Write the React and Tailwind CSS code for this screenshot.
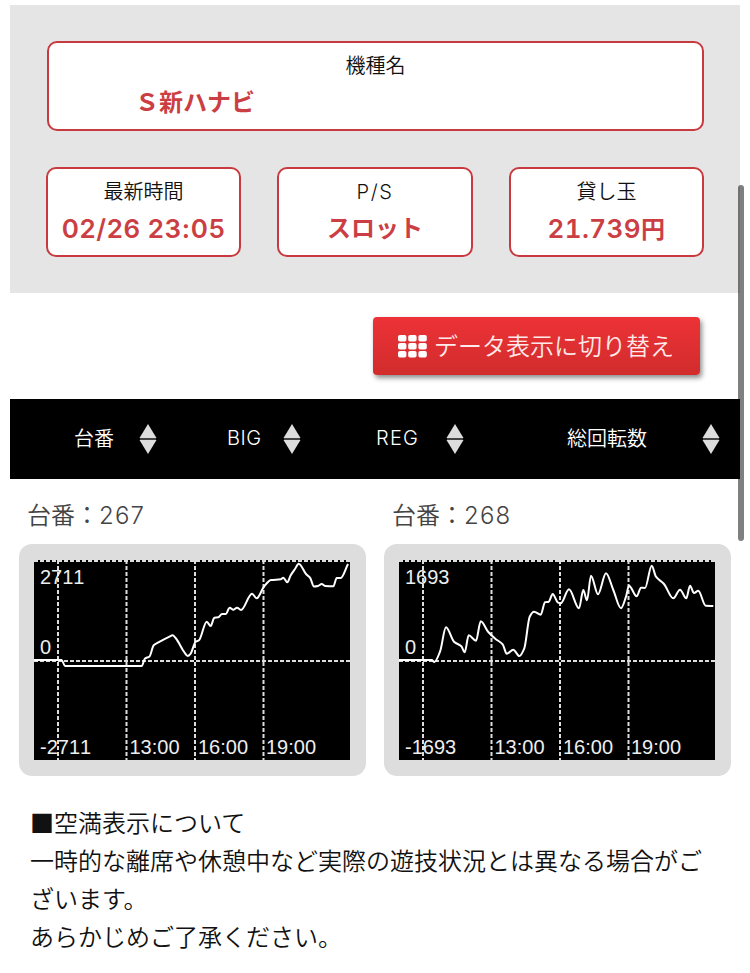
import React from "react";

const GRID_X = [24, 92.5, 161, 229.5];

const TIME_LABELS = [
  { x: 95.5, text: "13:00" },
  { x: 164, text: "16:00" },
  { x: 232, text: "19:00" },
];

const MACHINES = [
  {
    no: 267,
    max: 2711,
    points: [
      [0, 100], [27.7, 100], [31, 106], [107.7, 106], [111, 98.5], [115.5, 96.5],
      [119.7, 85.3], [123, 83.2], [135, 76.8], [138.7, 75.3], [142, 78.5],
      [150.5, 92.5], [153.7, 96], [156.5, 93.8], [161.7, 81.7],
      [165, 80.3], [172.7, 61.7], [176.7, 66], [180.3, 57.7], [184.3, 57.3],
      [188, 54], [191.7, 54], [195.7, 47.7], [199.3, 49.7], [203, 47.7],
      [207, 50], [218, 33.7], [222.7, 38.3], [230, 26.7], [237, 20],
      [246.7, 19.3], [249.3, 17.7], [253.3, 22.3], [256.7, 15.3], [261, 9],
      [264.7, 3.7], [272, 14], [276, 17.7], [280, 26.5], [284, 26],
      [287.7, 24], [291.3, 26], [299.3, 26.3], [302.7, 18], [306.7, 18], [314, 4],
    ],
  },
  {
    no: 268,
    max: 1693,
    points: [
      [0, 100], [32.7, 100], [35.3, 102], [41, 91.7], [47, 67.3], [55, 81.7],
      [62.3, 86.3], [65.7, 92.3], [69.7, 75.3], [77, 80.7], [81.7, 61.3],
      [89.3, 72], [96.3, 78.7], [103.7, 84.3], [107.7, 93.7], [114.3, 89.7],
      [120.3, 96], [125.3, 88.3], [130.7, 56.7], [135, 51.7], [141.7, 54.7],
      [146, 42.3], [149.7, 41.7], [153.7, 34], [158.7, 42.3], [161.7, 43.3],
      [170, 29.3], [180, 48.3], [184.3, 30], [188, 40.3], [192, 15.7],
      [199, 34.3], [207, 13.3], [214.3, 30], [222, 48.3], [227, 36.7],
      [230, 25.7], [237.7, 36.3], [242, 27.7], [246, 28], [252.7, 5.7],
      [257, 16.7], [265, 24], [274.3, 38.3], [281, 29.7], [287.3, 38.3],
      [291, 25.7], [295, 33], [299.3, 30.7], [306.7, 45.7], [314.3, 46],
    ],
  },
];

// Monotone cubic through the points, so peaks never overshoot
const toSmoothPath = (points) => {
  const slope = (i) =>
    (points[i + 1][1] - points[i][1]) / (points[i + 1][0] - points[i][0]);

  const tangents = points.map((_, i) => {
    if (i === 0) return slope(0);
    if (i === points.length - 1) return slope(i - 1);
    const a = slope(i - 1);
    const b = slope(i);
    return a * b <= 0 ? 0 : (2 * a * b) / (a + b);
  });

  return points.reduce((path, [x, y], i) => {
    if (i === 0) return `M${x} ${y}`;
    const [px, py] = points[i - 1];
    const third = (x - px) / 3;
    return `${path}C${px + third} ${py + tangents[i - 1] * third} ${x - third} ${
      y - tangents[i] * third
    } ${x} ${y}`;
  }, "");
};

const InfoBox = ({ label, children, className = "" }) => (
  <div
    className={`h-[90px] rounded-[10px] border-2 border-[#c93a40] bg-white pt-2 ${className}`}
  >
    <p className="mb-0.5 text-center text-xl leading-[30px] text-[#111]">{label}</p>
    {children}
  </div>
);

const SortIcon = () => (
  <svg width="18" height="32" viewBox="0 0 18 32" className="mr-px shrink-0">
    <path d="M9 1 17.5 15H.5Z" fill="#ddd" />
    <path d="M9 31 17.5 17H.5Z" fill="#ddd" />
    <path d="M1 16H17" stroke="#444" strokeWidth="2" />
  </svg>
);

const GridIcon = () => (
  <svg width="29" height="23" viewBox="0 0 29 23" fill="#fff">
    {[0, 8, 16].map((y) =>
      [0, 10.2, 20.4].map((x) => (
        <rect key={`${x}-${y}`} x={x} y={y} width="8.4" height="6.6" rx="1.8" />
      ))
    )}
  </svg>
);

const SlumpChart = ({ max, points }) => (
  <svg
    width="316"
    height="200"
    viewBox="0 0 316 200"
    className="block bg-black font-['Liberation_Sans',Arial,sans-serif] [font-kerning:none]"
  >
    <g stroke="#ddd" strokeWidth="2" strokeDasharray="4 2">
      <path d="M0 1H316M0 101H316" />
      {GRID_X.map((x) => (
        <path key={x} d={`M${x} 0V200`} />
      ))}
    </g>
    <g fill="#eee" fontSize="20">
      <text x="6" y="24">{max}</text>
      <text x="6" y="94">0</text>
      <text x="6" y="194">{-max}</text>
      {TIME_LABELS.map(({ x, text }) => (
        <text key={text} x={x} y="194">{text}</text>
      ))}
    </g>
    <path
      d={toSmoothPath(points)}
      fill="none"
      stroke="#fff"
      strokeWidth="2"
      strokeLinejoin="round"
    />
  </svg>
);

const MachineCard = ({ machine }) => (
  <div className="w-[347px]">
    <h3 className="pl-2 text-2xl leading-[36px] text-[#444]">
      台番：<span className="tracking-[1.2px]">{machine.no}</span>
    </h3>
    <div className="mt-2.5 rounded-[13px] bg-[#ddd] px-[15px] py-4">
      <SlumpChart max={machine.max} points={machine.points} />
    </div>
  </div>
);

const App = () => (
  <div className="relative h-[973px] w-[750px] overflow-hidden bg-white px-[10px] pt-[5px] font-['Inter','Noto_Sans_CJK_JP',sans-serif] font-[350] [font-feature-settings:'calt'_0]">
    <section className="h-[288px] bg-[#e5e5e5] pt-9 pr-9 pl-9">
      <InfoBox label="機種名" className="ml-px">
        <p className="pl-[86px] text-2xl leading-[40px] font-bold text-[#cb3e43]">
          Ｓ新ハナビ
        </p>
      </InfoBox>
      <div className="mt-9 flex justify-between">
        <InfoBox label="最新時間" className="w-[195px]">
          <p className="text-center text-[26px] leading-[40px] font-semibold tracking-[0.6px] whitespace-nowrap text-[#cb3e43]">
            02/26 23:05
          </p>
        </InfoBox>
        <InfoBox
          label={<span className="tracking-[1.6px]">P/S</span>}
          className="w-[196px]"
        >
          <p className="text-center text-2xl leading-[40px] font-bold text-[#cb3e43]">
            スロット
          </p>
        </InfoBox>
        <InfoBox label="貸し玉" className="w-[195px]">
          <p className="text-center text-[26px] leading-[40px] font-semibold tracking-[0.4px] text-[#cb3e43] tabular-nums">
            21.739<span className="text-2xl leading-[40px] font-bold">円</span>
          </p>
        </InfoBox>
      </div>
    </section>

    <div className="flex justify-end pt-6 pr-10">
      <button className="flex h-[58px] w-[327px] items-center gap-[7px] rounded bg-linear-to-b from-[#ed3237] to-[#d12c2c] pl-[25px] text-2xl text-[#ffe9e9] shadow-[2px_3px_5px_rgba(0,0,0,0.45)]">
        <GridIcon />
        <span className="pt-0.5">データ表示に切り替え</span>
      </button>
    </div>

    <div className="mt-6 flex h-20 items-center bg-black text-xl text-white">
      <div className="flex w-[148px] items-center justify-between pl-16">
        <span>台番</span>
        <SortIcon />
      </div>
      <div className="flex w-[144px] items-center justify-between pl-[69px]">
        <span className="pb-0.5 tracking-[0.5px]">BIG</span>
        <SortIcon />
      </div>
      <div className="flex w-[163px] items-center justify-between pl-[74px]">
        <span className="pb-0.5 tracking-[1.2px]">REG</span>
        <SortIcon />
      </div>
      <div className="flex w-[256px] items-center justify-between pl-[102px]">
        <span>総回転数</span>
        <SortIcon />
      </div>
    </div>

    <div className="mt-[19px] flex gap-[18px] pl-[9px]">
      {MACHINES.map((machine) => (
        <MachineCard key={machine.no} machine={machine} />
      ))}
    </div>

    <div className="mt-[27px] pr-6 pl-5 font-['Noto_Sans_CJK_JP',sans-serif] text-2xl leading-[38px] text-[#111]">
      <p>■空満表示について</p>
      <p>一時的な離席や休憩中など実際の遊技状況とは異なる場合がございます。</p>
      <p>あらかじめご了承ください。</p>
    </div>

    <div className="absolute top-[185px] left-[738px] h-[356px] w-1.5 rounded-full bg-black/50" />
  </div>
);

export default App;
